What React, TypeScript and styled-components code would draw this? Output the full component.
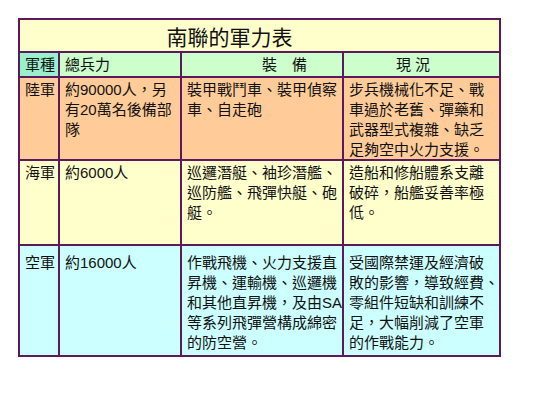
import React from 'react';
import styled, { createGlobalStyle } from 'styled-components';

const GlobalStyle = createGlobalStyle`
  html, body {
    margin: 0;
    padding: 0;
    background: #ffffff;
  }
  body {
    font-family: "Liberation Sans", "Noto Sans CJK TC", sans-serif;
    color: #111111;
  }
`;

const BORDER = '#5c1a5c';

type ArmRow = {
  name: string;
  tone: string;
  padTop: number;
  troops: string[];
  equip: string[];
  status: string[];
};

const ROWS: ArmRow[] = [
  {
    name: '陸軍',
    tone: '#ffcc99',
    padTop: 2,
    troops: ['約90000人，另', '有20萬名後備部', '隊'],
    equip: ['裝甲戰鬥車、裝甲偵察', '車、自走砲'],
    status: ['步兵機械化不足、戰', '車過於老舊、彈藥和', '武器型式複雜、缺乏', '足夠空中火力支援。'],
  },
  {
    name: '海軍',
    tone: '#ffffcc',
    padTop: 2,
    troops: ['約6000人'],
    equip: ['巡邏潛艇、袖珍潛艦、', '巡防艦、飛彈快艇、砲', '艇。'],
    status: ['造船和修船體系支離', '破碎，船艦妥善率極', '低。'],
  },
  {
    name: '空軍',
    tone: '#ccffff',
    padTop: 7,
    troops: ['約16000人'],
    equip: ['作戰飛機、火力支援直', '昇機、運輸機、巡邏機', '和其他直昇機，及由SA', '等系列飛彈營構成綿密', '的防空營。'],
    status: ['受國際禁運及經濟破', '敗的影響，導致經費、', '零組件短缺和訓練不', '足，大幅削減了空軍', '的作戰能力。'],
  },
];

const Page = styled.div`
  width: 533px;
  height: 400px;
  box-sizing: border-box;
  padding: 18px 0 0 18px;
`;

const Table = styled.div`
  display: grid;
  grid-template-columns: 38px 120px 160px 155px;
  grid-template-rows: 31px 23px 81px 83px 109px;
  gap: 2px;
  width: max-content;
  border: 2px solid ${BORDER};
  background: ${BORDER};
`;

const Title = styled.div`
  grid-column: 1 / -1;
  display: flex;
  align-items: center;
  justify-content: center;
  padding-right: 60px;
  background: #ffffcc;
  font-size: 21px;
  font-family: "Noto Sans CJK TC", sans-serif;
`;

const Head = styled.div<{ tone: string; align?: string; shift?: number }>`
  background: ${p => p.tone};
  padding: 2px 4px 0 5px;
  padding-left: ${p => (p.shift && p.shift > 0 ? 5 + p.shift : 5)}px;
  padding-right: ${p => (p.shift && p.shift < 0 ? 4 - p.shift : 4)}px;
  font-size: 15px;
  line-height: 20px;
  text-align: ${p => p.align || 'left'};
  white-space: nowrap;
`;

const Cell = styled.div<{ tone: string; padTop: number }>`
  background: ${p => p.tone};
  padding: ${p => p.padTop}px 3px 0 5px;
  font-size: 15px;
  line-height: 20px;
  white-space: nowrap;
`;

const Line = styled.span`
  display: block;
`;

function renderLines(lines: string[]) {
  return lines.map((line, i) => <Line key={i}>{line}</Line>);
}

export default function App() {
  return (
    <Page>
      <GlobalStyle />
      <Table>
        <Title>南聯的軍力表</Title>
        <Head tone="#99f0cc">軍種</Head>
        <Head tone="#ccffcc">總兵力</Head>
        <Head tone="#ccffcc" align="center" shift={44}>裝　備</Head>
        <Head tone="#ccffcc" align="center" shift={-18}>現 況</Head>
        {ROWS.map(row => (
          <React.Fragment key={row.name}>
            <Cell tone={row.tone} padTop={row.padTop}>{row.name}</Cell>
            <Cell tone={row.tone} padTop={row.padTop}>{renderLines(row.troops)}</Cell>
            <Cell tone={row.tone} padTop={row.padTop}>{renderLines(row.equip)}</Cell>
            <Cell tone={row.tone} padTop={row.padTop}>{renderLines(row.status)}</Cell>
          </React.Fragment>
        ))}
      </Table>
    </Page>
  );
}
